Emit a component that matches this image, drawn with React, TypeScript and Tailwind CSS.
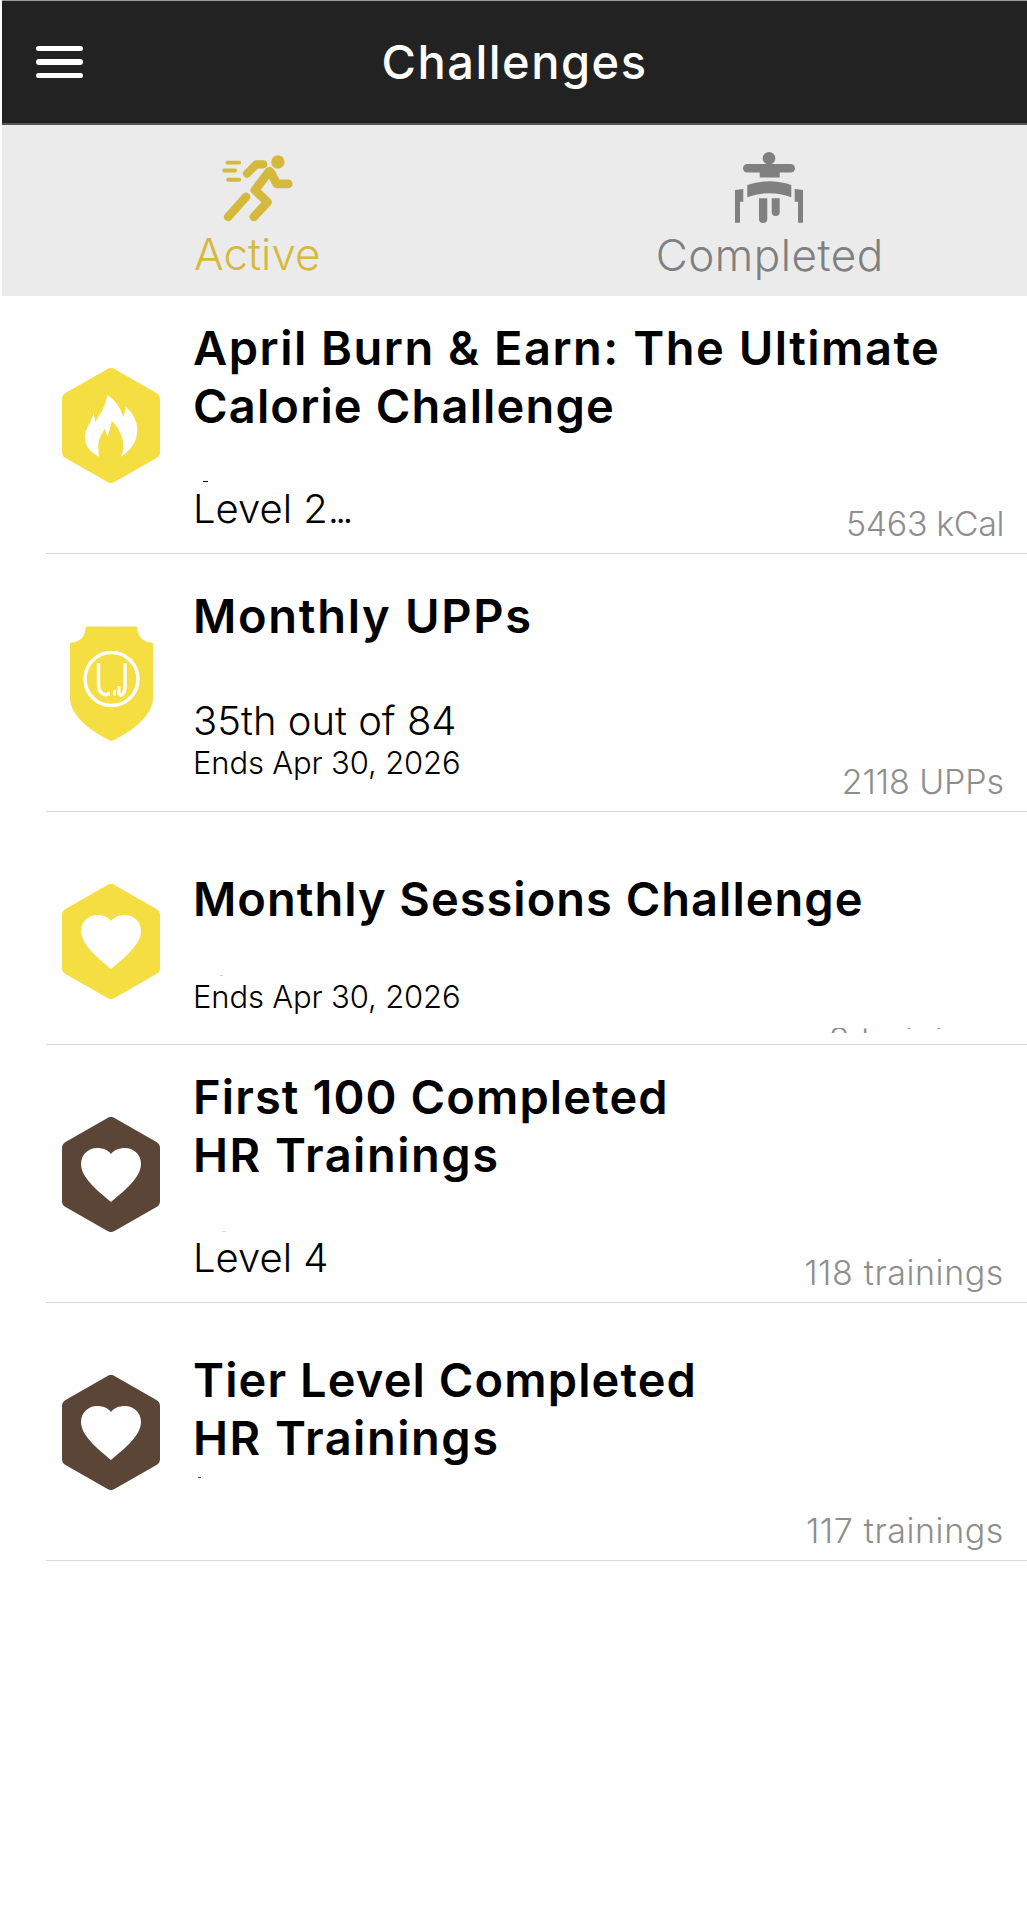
const font = "font-['Inter','Noto_Sans',sans-serif]"

function Hexagon({ fill, children }: { fill: string; children: React.ReactNode }) {
  return (
    <svg width="98" height="115" viewBox="0 0 98 115">
      <polygon points="49,7 91,31 91,84 49,108 7,84 7,31" fill={fill} stroke={fill} strokeWidth="14" strokeLinejoin="round" />
      {children}
    </svg>
  )
}

const heart = "M49 85 C40 77 19 62 19 47 C19 37 27 31 35 31 C41 31 46 33 49 37 C52 33 57 31 63 31 C71 31 79 37 79 47 C79 62 58 77 49 85 Z"

function FlameBadge() {
  return (
    <Hexagon fill="#f5de42">
      <path
        d="M37 88.7 C28 84 23 78 23 68.7 C23 60 30 54 31.3 45.3 C32.5 48 33 51 33 54.3 C38 46 44 38 45.3 27 C53 32 59 40 61.3 49.3 C62.5 46 63.5 42 63.7 38.7 C71 45 75.3 53 75.3 62 C75.3 74 68 83 58.7 88.7 C61 84 61.8 81 61.3 76 C60.5 66 55 58 49.7 52.7 C49 58 47 64 45.3 68.7 C44.5 66 43.5 63 43 60.3 C40 66 36 71 36.3 78.7 C36.4 82 36.6 85 37 88.7 Z"
        fill="#fff"
      />
    </Hexagon>
  )
}

function HeartBadge({ fill }: { fill: string }) {
  return (
    <Hexagon fill={fill}>
      <path d={heart} fill="#fff" />
    </Hexagon>
  )
}

function ShieldBadge() {
  return (
    <svg width="83" height="115" viewBox="0 0 83 115">
      <path
        d="M17 0.5 H66 Q67.5 0.5 67.5 2 C67.5 11 74 16.5 81.5 16.5 Q83 16.5 83 18 V72 C83 90 60 107 41.5 115 C23 107 0 90 0 72 V18 Q0 16.5 1.5 16.5 C9 16.5 15.5 11 15.5 2 Q15.5 0.5 17 0.5 Z"
        fill="#f5de42"
      />
      <circle cx="41.5" cy="53" r="26.5" fill="none" stroke="#fff" strokeWidth="3.6" />
      <path d="M28.5 37 V59 Q28.5 68 37 69" fill="none" stroke="#fff" strokeWidth="3.4" />
      <path d="M55 37 V61 Q55 68 49.5 70" fill="none" stroke="#fff" strokeWidth="3.4" />
      <rect x="37" y="66" width="3" height="3.5" fill="#fff" />
      <rect x="43" y="64" width="3" height="5.5" fill="#fff" />
      <rect x="47.5" y="60" width="3" height="9.5" fill="#fff" />
    </svg>
  )
}

function RunnerIcon() {
  return (
    <svg width="71" height="68" viewBox="0 0 69 66" fill="none" stroke="#d5b93c" strokeLinecap="round" strokeLinejoin="round">
      <circle cx="54.3" cy="7.7" r="6.5" fill="#d5b93c" stroke="none" />
      <path d="M6 61 L23.3 41.7" strokeWidth="8.5" />
      <path d="M31 61 L44.3 46.7 L32 35 L46 16.7" strokeWidth="8.5" />
      <path d="M47.7 18.3 L53.3 29 L64.3 29" strokeWidth="8.5" />
      <path d="M24.3 19 L33.3 10 L40 10" strokeWidth="8" />
      <path d="M5.3 8.3 H16.7 M2 16 H12.7 M6 25 H16.7" strokeWidth="3.8" />
    </svg>
  )
}

function BenchIcon() {
  return (
    <svg width="71" height="72" viewBox="0 0 71 72" fill="#808080">
      <circle cx="35" cy="6.3" r="6.3" />
      <rect x="9" y="12" width="52" height="8.6" rx="4.3" />
      <rect x="25.7" y="16" width="20" height="9.5" />
      <path d="M13.3 33 Q35 25.5 57.3 33 V45.3 Q35 37 13.3 45.3 Z" />
      <path d="M25 46.3 H33.3 V67 Q33.3 71 29 71 Q25 71 25 67 Z" />
      <path d="M37.7 46.3 H45.7 V60 Q45.7 64 41.7 64 Q37.7 64 37.7 60 Z" />
      <path d="M1 38 L9.3 37 V49.7 H6 V70.7 H1 Z" />
      <path d="M69 38 L60.7 37 V49.7 H64 V70.7 H69 Z" />
    </svg>
  )
}

type RowProps = {
  height: string
  badge: React.ReactNode
  badgeTop: string
  title: { text: string; tracking: string }[]
  titleTop: string
  subBottom: string
  valueClass: string
  rank?: React.ReactNode
  ends?: string
  value?: string
  clippedValue?: string
  speck?: string
}

function Row({ height, badge, badgeTop, title, titleTop, subBottom, valueClass, rank, ends, value, clippedValue, speck }: RowProps) {
  return (
    <div className={`relative flex ml-[46px] border-b border-[#d9d9d9] ${height}`}>
      <div className={`w-[130px] shrink-0 flex items-center justify-center ${badgeTop}`}>{badge}</div>
      <div className={`flex-1 min-w-0 flex flex-col overflow-hidden pl-[17px] pr-[23px] ${titleTop}`}>
        {title.map((line) => (
          <div key={line.text} className={`text-[47px] leading-[58px] font-semibold text-black whitespace-nowrap ${line.tracking}`}>
            {line.text}
          </div>
        ))}
        <div className="flex-1 flex items-end justify-between">
          <div className={subBottom}>
            {rank && <div className="text-[40px] leading-[46px] font-light text-black">{rank}</div>}
            {ends && <div className="text-[31px] leading-[38px] font-light text-black tracking-[-0.15px]">{ends}</div>}
          </div>
          {value && <div className={`text-[34px] leading-[40px] font-light text-[#8e8e8e] pb-[9px] ${valueClass}`}>{value}</div>}
          {clippedValue && (
            <div className={`h-[5px] overflow-hidden text-[34px] leading-[24px] font-light text-[#8e8e8e] mb-[11px] ${valueClass}`}>{clippedValue}</div>
          )}
        </div>
      </div>
      {/* leftovers of clipped text in the app */}
      {speck && <span className={`absolute h-px ${speck}`} />}
    </div>
  )
}

export default function App() {
  return (
    <div className={`min-h-[1920px] bg-white ${font}`}>
      <header className="h-[125px] bg-[#222222] border-t border-[#9a9a9a] border-b-2 border-b-[#555555] flex items-center relative ml-[2px]">
        <button className="ml-[34px] w-[47px] flex flex-col gap-[8px]">
          <span className="h-[5.5px] rounded-full bg-white" />
          <span className="h-[5.5px] rounded-full bg-white" />
          <span className="h-[5.5px] rounded-full bg-white" />
        </button>
        <h1 className="absolute inset-x-0 text-center text-[47px] font-medium text-white tracking-[1.5px]">Challenges</h1>
      </header>

      <nav className="h-[171px] bg-[#ebebeb] ml-[2px] grid grid-cols-2">
        <div className="flex flex-col items-center pt-[29px] -translate-x-[1px]">
          <RunnerIcon />
          <span className="text-[44px] leading-[50px] font-light text-[#d5b93c] mt-[7px]">Active</span>
        </div>
        <div className="flex flex-col items-center pt-[27px] -translate-x-[1px]">
          <BenchIcon />
          <span className="text-[44px] leading-[50px] font-light text-[#808080] mt-[6px] tracking-[0.5px]">Completed</span>
        </div>
      </nav>

      <main>
        <Row
          height="h-[258px]"
          badge={<FlameBadge />}
          badgeTop="pt-[2px]"
          title={[
            { text: "April Burn & Earn: The Ultimate", tracking: "tracking-[1.5px]" },
            { text: "Calorie Challenge", tracking: "tracking-[1.15px]" },
          ]}
          titleTop="pt-[23px]"
          subBottom="pb-[21px]"
          valueClass="tracking-[-0.4px]"
          rank={<>Level 2<span className="tracking-[-4px]">...</span></>}
          value="5463 kCal"
          speck="left-[157px] top-[185px] w-[5px] bg-black"
        />
        <Row
          height="h-[258px]"
          badge={<ShieldBadge />}
          badgeTop="pt-[2px]"
          title={[{ text: "Monthly UPPs", tracking: "tracking-[1.7px]" }]}
          titleTop="pt-[33px]"
          subBottom="pb-[29px]"
          valueClass="tracking-[-0.1px]"
          rank="35th out of 84"
          ends="Ends Apr 30, 2026"
          value="2118 UPPs"
        />
        <Row
          height="h-[233px]"
          badge={<HeartBadge fill="#f5de42" />}
          badgeTop="pt-[27px]"
          title={[{ text: "Monthly Sessions Challenge", tracking: "tracking-[1px]" }]}
          titleTop="pt-[58px]"
          subBottom="pb-[28px]"
          valueClass="tracking-[0.9px]"
          ends="Ends Apr 30, 2026"
          clippedValue="8 trainings"
          speck="left-[174px] top-[163px] w-[3px] bg-[#cccccc]"
        />
        <Row
          height="h-[258px]"
          badge={<HeartBadge fill="#5a4536" />}
          badgeTop="pt-[2px]"
          title={[
            { text: "First 100 Completed", tracking: "tracking-[1.1px]" },
            { text: "HR Trainings", tracking: "tracking-[1.5px]" },
          ]}
          titleTop="pt-[23px]"
          subBottom="pb-[21px]"
          valueClass="tracking-[0.6px]"
          rank="Level 4"
          value="118 trainings"
          speck="left-[176px] top-[186px] w-[4px] bg-[#dddddd]"
        />
        <Row
          height="h-[258px]"
          badge={<HeartBadge fill="#5a4536" />}
          badgeTop="pt-[2px]"
          title={[
            { text: "Tier Level Completed", tracking: "tracking-[1.1px]" },
            { text: "HR Trainings", tracking: "tracking-[1.5px]" },
          ]}
          titleTop="pt-[48px]"
          subBottom="pb-[21px]"
          valueClass="tracking-[0.6px]"
          value="117 trainings"
          speck="left-[152px] top-[174px] w-[3px] bg-[#555555]"
        />
      </main>
    </div>
  )
}
